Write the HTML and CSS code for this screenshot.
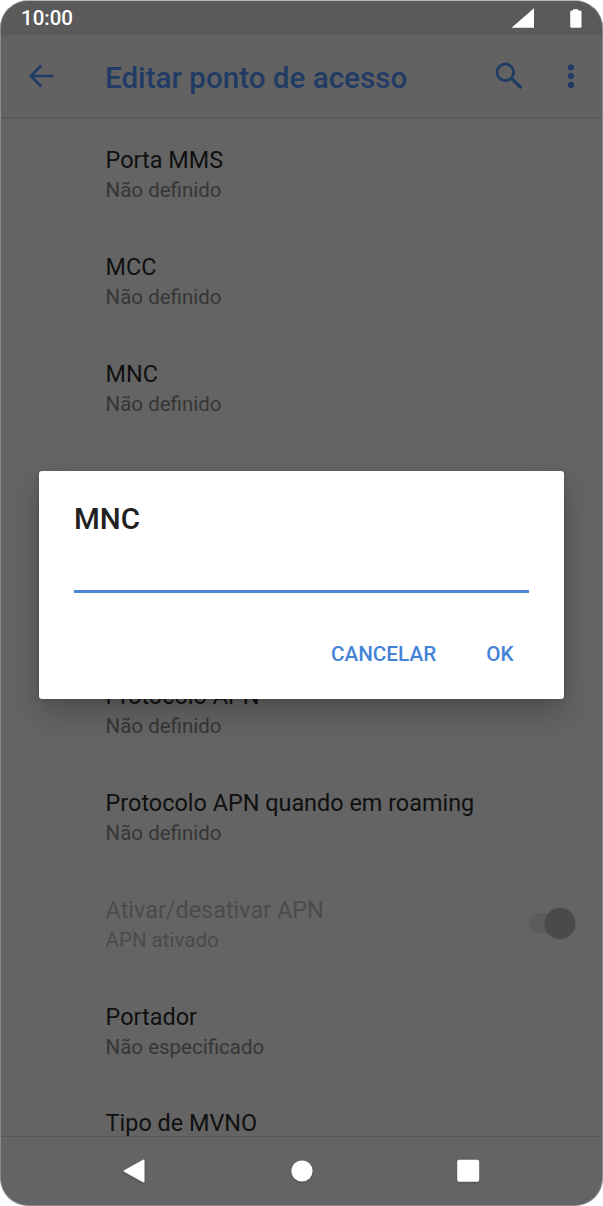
FILE: index.html
```html
<!DOCTYPE html>
<html lang="pt">
<head>
<meta charset="utf-8">
<title>Editar ponto de acesso</title>
<link rel="stylesheet" href="styles.css">
</head>
<body>
<div class="phone">
  <div class="status">
    <span class="time">10:00</span>
    <svg class="status-icons" width="80" height="35" viewBox="0 0 80 35" fill="#fff"><path d="M11.5 26.8 34 7.3V26.8Z"/><path d="M73 8.3h5v1.200h2a1.500 1.500 0 0 1 1.500 1.500V25.500a1.300 1.300 0 0 1-1.300 1.300H71.500a1.300 1.300 0 0 1-1.300-1.300V11a1.500 1.500 0 0 1 1.500-1.500H73Z"/></svg>
  </div>
  <header class="appbar">
    <svg class="back" width="28" height="28" viewBox="0 0 28 28" fill="none" stroke="#213b65" stroke-width="2.500"><path d="M26.500 14H4M14.300 3.500 3.800 14l10.500 10.500"/></svg>
    <h1 class="heading">Editar ponto de acesso</h1>
    <svg class="search" width="30" height="30" viewBox="0 0 30 30" fill="none" stroke="#213b65"><circle cx="11.300" cy="11.300" r="8.300" stroke-width="2.800"/><path d="m17.500 17.300 9.800 9.800" stroke-width="3.300"/></svg>
    <svg class="more" width="8" height="26" viewBox="0 0 8 26" fill="#213b65"><circle cx="4" cy="4.300" r="3.100"/><circle cx="4" cy="13.100" r="3.100"/><circle cx="4" cy="21.900" r="3.100"/></svg>
  </header>
  <main class="list">
    <div class="row"><div class="name">Porta MMS</div><div class="value">Não definido</div></div>
    <div class="row"><div class="name">MCC</div><div class="value">Não definido</div></div>
    <div class="row"><div class="name">MNC</div><div class="value">Não definido</div></div>
    <div class="row covered"></div>
    <div class="row covered"></div>
    <div class="row"><div class="name">Protocolo APN</div><div class="value">Não definido</div></div>
    <div class="row"><div class="name">Protocolo APN quando em roaming</div><div class="value">Não definido</div></div>
    <div class="row switch-row disabled"><div><div class="name">Ativar/desativar APN</div><div class="value">APN ativado</div></div><div class="track"><div class="thumb"></div></div></div>
    <div class="row"><div class="name">Portador</div><div class="value">Não especificado</div></div>
    <div class="row last"><div class="name">Tipo de MVNO</div></div>
  </main>
  <nav class="navbar">
    <svg class="nav-icon" width="24" height="26" viewBox="0 0 24 26"><path d="M20.500 2.500v21L1.600 13Z" fill="#fff" stroke="#fff" stroke-width="2" stroke-linejoin="round"/></svg>
    <svg class="nav-icon" width="24" height="26" viewBox="0 0 24 26"><circle cx="12" cy="13" r="10.600" fill="#fff"/></svg>
    <svg class="nav-icon" width="24" height="26" viewBox="0 0 24 26"><rect x=".2" y="1.800" width="22" height="22" rx="1.800" fill="#fff"/></svg>
  </nav>
  <section class="dialog">
    <h2 class="dialog-title">MNC</h2>
    <div class="field"></div>
    <div class="actions"><span class="cancel">CANCELAR</span><span class="ok">OK</span></div>
  </section>
</div>
</body>
</html>
```
FILE: styles.css
```css
* { box-sizing: border-box; }
body { margin: 0; background: #fff; font-family: Roboto, sans-serif; }
.phone { position: relative; display: flex; flex-direction: column; width: 603px; height: 1206px; overflow: hidden; background: #646464; border: 1px solid #8b8b8b; border-top-color: #b5b9b5; border-radius: 28px; }
.status { display: flex; justify-content: space-between; height: 34px; background: #5a5a5a; }
.time { padding-left: 20px; color: #fff; font-size: 20.500px; font-weight: 500; line-height: 35px; }
.status-icons { margin-right: 22px; overflow: visible; }
.appbar { display: flex; align-items: center; height: 82px; background: #626262; box-shadow: 0 1px 2px #00000030; }
.back { margin-left: 26px; }
.heading { flex: 1; margin: 3px 0 0 50px; color: #213b65; font-size: 29.600px; font-weight: 500; line-height: 36px; white-space: nowrap; }
.search { margin-right: 43px; }
.more { margin-right: 27px; }
.list { height: 1019px; padding-top: 28px; overflow: hidden; }
.row { height: 107.150px; padding-left: 104.600px; white-space: nowrap; }
.name { height: 31px; color: #101010; font-size: 23.420px; line-height: 31px; }
.value { height: 28px; color: #363636; font-size: 20.500px; line-height: 28px; }
.last { height: 26px; padding-top: 3px; }
.last .name { height: 23px; line-height: 23px; }
.disabled .name, .disabled .value { color: #4b4b4b; }
.switch-row { display: flex; justify-content: space-between; }
.track { display: flex; justify-content: flex-end; align-items: center; width: 46px; height: 20px; margin: 18px 27px 0 0; border-radius: 10px; background: #5c5c5c; }
.thumb { width: 30px; height: 30px; border-radius: 50%; background: #4a4a4a; box-shadow: 0 1px 2px #0005; flex: none; }
.navbar { display: flex; justify-content: center; gap: 143px; flex: 1; padding: 21px 0 0; border-top: 1px solid #545454; }
.nav-icon { filter: drop-shadow(0 1px 1px #0003); }
.dialog { position: absolute; left: 38px; top: 470px; width: 525px; height: 228px; padding: 30px 35px 0; border-radius: 3px; background: #fff; box-shadow: 0 14px 30px #00000038, 0 1px 5px #00000020; }
.dialog-title { margin: 0; color: #212121; font-size: 29.500px; font-weight: 500; line-height: 36px; }
.field { height: 56px; border-bottom: 3px solid #4d86d6; }
.actions { display: flex; justify-content: flex-end; gap: 50px; margin-top: 46px; padding-right: 15.500px; color: #4483d8; font-size: 20.700px; font-weight: 500; line-height: 30px; }
```
